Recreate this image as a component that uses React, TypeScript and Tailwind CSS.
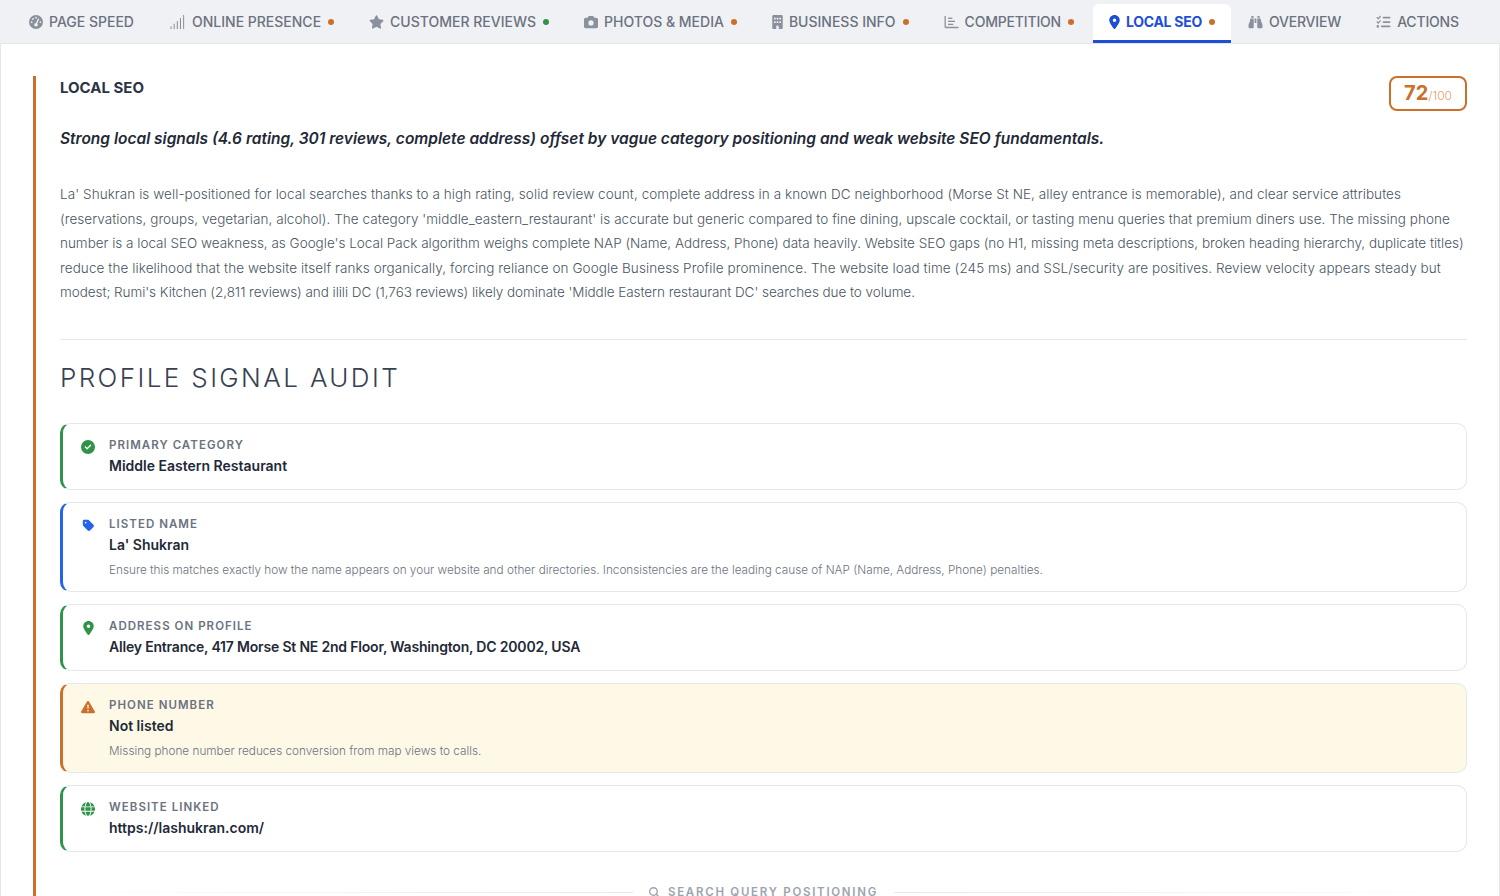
import type { ReactNode } from 'react'
import {
  FaBinoculars,
  FaBuilding,
  FaCamera,
  FaCircleCheck,
  FaGaugeHigh,
  FaGlobe,
  FaListCheck,
  FaLocationDot,
  FaMagnifyingGlass,
  FaStar,
  FaTag,
  FaTriangleExclamation,
} from 'react-icons/fa6'

function SignalIcon() {
  return (
    <svg viewBox="0 0 16 16" className="h-[14px] w-[17px]" fill="currentColor">
      <rect x="0" y="13" width="1.2" height="3" />
      <rect x="3.6" y="10" width="1.2" height="6" />
      <rect x="7.2" y="7" width="1.2" height="9" />
      <rect x="10.8" y="3.5" width="1.2" height="12.5" />
      <rect x="14.4" y="0" width="1.2" height="16" />
    </svg>
  )
}

function ChartIcon() {
  return (
    <svg viewBox="0 0 16 16" className="h-[14px] w-[15px]" fill="currentColor">
      <path d="M0 1h1.5v12.5H16V15H1.5A1.5 1.5 0 0 1 0 13.5z" />
      <rect x="4" y="3" width="5" height="1.5" />
      <rect x="4" y="6.5" width="8" height="1.5" />
      <rect x="4" y="10" width="6" height="1.5" />
    </svg>
  )
}

const tabs: { label: string; icon: ReactNode; dot?: 'orange' | 'green'; active?: boolean; tight?: boolean }[] = [
  { label: 'Page Speed', icon: <FaGaugeHigh className="h-[14px] w-[14px]" /> },
  { label: 'Online Presence', icon: <SignalIcon />, dot: 'orange' },
  { label: 'Customer Reviews', icon: <FaStar className="h-[14px] w-[15px]" />, dot: 'green' },
  { label: 'Photos & Media', icon: <FaCamera className="h-[14px] w-[14px]" />, dot: 'orange' },
  { label: 'Business Info', icon: <FaBuilding className="h-[14px] w-[11px]" />, dot: 'orange' },
  { label: 'Competition', icon: <ChartIcon />, dot: 'orange', tight: true },
  { label: 'Local SEO', icon: <FaLocationDot className="h-[14px] w-[11px]" />, dot: 'orange', active: true },
  { label: 'Overview', icon: <FaBinoculars className="h-[14px] w-[15px]" />, tight: true },
  { label: 'Actions', icon: <FaListCheck className="h-[14px] w-[15px]" />, tight: true },
]

function Tab({ label, icon, dot, active, tight }: (typeof tabs)[number]) {
  return (
    <div
      className={
        active
          ? '-mr-[2px] flex h-[39px] items-center gap-[6px] rounded-t-md border-b-[3px] border-[#1d4ed8] bg-white px-4 pb-[1px] text-[#1d4ed8]'
          : 'flex h-[39px] items-center gap-[6px] border-b-[3px] border-transparent px-4 pb-[1px] text-[#6b7280]'
      }
    >
      <span className={active ? 'text-[#1d4ed8]' : 'text-[#8b919c]'}>{icon}</span>
      <span
        className={
          active
            ? 'text-[14px] font-bold tracking-[-0.02em] uppercase'
            : tight
              ? 'text-[14px] font-medium tracking-[-0.18px] uppercase'
              : 'text-[14px] font-medium uppercase'
        }
      >
        {label}
      </span>
      {dot && (
        <span
          className={
            dot === 'green'
              ? 'ml-[1px] h-[6px] w-[6px] rounded-full bg-[#2f9348]'
              : 'ml-[1px] h-[6px] w-[6px] rounded-full bg-[#cc6f2a]'
          }
        />
      )}
    </div>
  )
}

function SignalCard({
  icon,
  label,
  value,
  valueClassName = '',
  note,
  tone = 'green',
}: {
  icon: ReactNode
  label: string
  value: string
  valueClassName?: string
  note?: string
  tone?: 'green' | 'blue' | 'orange'
}) {
  const toneClass =
    tone === 'blue'
      ? 'border-l-[#2563eb] bg-white'
      : tone === 'orange'
        ? 'border-l-[#cc6f2a] bg-[#fef9e7]'
        : 'border-l-[#2f9348] bg-white'
  const iconClass = tone === 'blue' ? 'text-[#2563eb]' : tone === 'orange' ? 'text-[#cc6f2a]' : 'text-[#2f9348]'
  return (
    <div className={`flex rounded-[10px] border border-l-[3px] border-[#e5e7eb] pt-[13px] pb-[13px] pl-[18px] ${toneClass}`}>
      <div className={`flex h-[20px] w-[14px] items-center justify-center ${iconClass}`}>{icon}</div>
      <div className="ml-[14px] flex flex-col">
        <div className="text-[11.5px] leading-[16px] font-semibold tracking-[0.09em] text-[#6b7280] uppercase">{label}</div>
        <div className={`mt-[2px] text-[14px] leading-[21px] font-semibold text-[#1f2937] ${valueClassName}`}>{value}</div>
        {note && <div className="mt-[7px] text-[11.75px] leading-[16px] font-light text-[#6b7280]">{note}</div>}
      </div>
    </div>
  )
}

export default function App() {
  return (
    <div className="h-[896px] overflow-hidden bg-white font-['Inter',sans-serif]">
      <div className="flex h-[44px] items-end gap-[3px] border-b border-[#e5e7eb] bg-[#f0f1f4] pl-[13px]">
        {tabs.map((tab) => (
          <Tab key={tab.label} {...tab} />
        ))}
      </div>

      <div className="border-x border-[#e5e7eb] px-8 pt-8">
        <section className="border-l-[3px] border-[#cc6f2a] pl-6">
          <div className="flex items-start justify-between">
            <h2 className="pt-[2px] text-[15px] leading-[20px] font-bold text-[#2b3444] uppercase">Local SEO</h2>
            <div className="flex h-[35px] w-[78px] items-baseline justify-center rounded-lg border-2 border-[#cc6f2a] pt-[2px]">
              <span className="text-[20px] leading-[27px] font-bold text-[#cc6f2a]">72</span>
              <span className="text-[12px] font-light text-[#cc6f2a]/70">/100</span>
            </div>
          </div>

          <p className="mt-[16px] text-[15.5px] leading-[24px] font-semibold text-[#1f2937] italic">
            Strong local signals (4.6 rating, 301 reviews, complete address) offset by vague category positioning and weak website SEO fundamentals.
          </p>

          <p className="mt-[31px] text-[13.5px] leading-[24.5px] font-light whitespace-nowrap text-[#4b5563]">
            <span className="block tracking-[0.066px]">
              La' Shukran is well-positioned for local searches thanks to a high rating, solid review count, complete address in a known DC neighborhood (Morse St NE, alley entrance is memorable), and clear service attributes
            </span>
            <span className="block tracking-[0.046px]">
              (reservations, groups, vegetarian, alcohol). The category 'middle_eastern_restaurant' is accurate but generic compared to fine dining, upscale cocktail, or tasting menu queries that premium diners use. The missing phone
            </span>
            <span className="block tracking-[-0.01px]">
              number is a local SEO weakness, as Google's Local Pack algorithm weighs complete NAP (Name, Address, Phone) data heavily. Website SEO gaps (no H1, missing meta descriptions, broken heading hierarchy, duplicate titles)
            </span>
            <span className="block tracking-[0.088px]">
              reduce the likelihood that the website itself ranks organically, forcing reliance on Google Business Profile prominence. The website load time (245 ms) and SSL/security are positives. Review velocity appears steady but
            </span>
            <span className="block tracking-[-0.058px]">
              modest; Rumi's Kitchen (2,811 reviews) and ilili DC (1,763 reviews) likely dominate 'Middle Eastern restaurant DC' searches due to volume.
            </span>
          </p>

          <div className="mt-[34px] border-t border-[#e5e7eb] pt-[20px]">
            <h3 className="text-[26px] leading-[36px] font-light tracking-[2.4px] text-[#374151] uppercase">Profile Signal Audit</h3>
          </div>

          <div className="mt-[27px] flex flex-col gap-3">
            <SignalCard icon={<FaCircleCheck className="h-[14px] w-[14px]" />} label="Primary Category" value="Middle Eastern Restaurant" />
            <SignalCard
              tone="blue"
              icon={<FaTag className="h-[13px] w-[13px]" />}
              label="Listed Name"
              value="La' Shukran"
              note="Ensure this matches exactly how the name appears on your website and other directories. Inconsistencies are the leading cause of NAP (Name, Address, Phone) penalties."
            />
            <SignalCard
              icon={<FaLocationDot className="h-[14px] w-[11px]" />}
              label="Address on Profile"
              value="Alley Entrance, 417 Morse St NE 2nd Floor, Washington, DC 20002, USA"
              valueClassName="tracking-[-0.19px]"
            />
            <SignalCard
              tone="orange"
              icon={<FaTriangleExclamation className="h-[14px] w-[14px]" />}
              label="Phone Number"
              value="Not listed"
              note="Missing phone number reduces conversion from map views to calls."
            />
            <SignalCard icon={<FaGlobe className="h-[14px] w-[14px]" />} label="Website Linked" value="https://lashukran.com/" />
          </div>

          <div className="mt-[32px] flex items-center gap-4">
            <div className="h-px flex-1 bg-gradient-to-r from-transparent to-[#e5e7eb]" />
            <div className="flex items-center gap-[8px] text-[#9ca3af]">
              <FaMagnifyingGlass className="h-[11px] w-[11px]" />
              <span className="text-[11.5px] font-semibold tracking-[0.15em] uppercase">Search Query Positioning</span>
            </div>
            <div className="h-px flex-1 bg-gradient-to-l from-transparent to-[#e5e7eb]" />
          </div>
        </section>
      </div>
    </div>
  )
}
